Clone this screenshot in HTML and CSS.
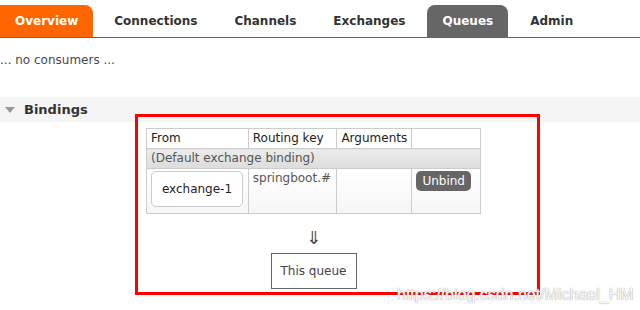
FILE: index.html
```html
<!DOCTYPE html>
<html lang="en">
<head>
    <meta charset="UTF-8">
    <title>Queues</title>
    <link rel="stylesheet" href="styles.css">
</head>
<body>
<div class="page">
    <!-- Top tabs -->
    <ul class="tabs">
        <li class="tab tab-overview">Overview</li>
        <li class="tab">Connections</li>
        <li class="tab">Channels</li>
        <li class="tab">Exchanges</li>
        <li class="tab tab-active">Queues</li>
        <li class="tab">Admin</li>
    </ul>

    <p class="consumers">... no consumers ...</p>

    <!-- Bindings section -->
    <div class="section-head">
        <span class="toggle"></span>
        <h2>Bindings</h2>
    </div>

    <div class="highlight">
        <div class="bindings">
            <table class="list">
                <tr>
                    <th class="col-from">From</th>
                    <th class="col-key">Routing key</th>
                    <th class="col-args">Arguments</th>
                    <th class="col-act"></th>
                </tr>
                <tr class="default-row">
                    <td colspan="4">(Default exchange binding)</td>
                </tr>
                <tr class="data-row">
                    <td><span class="exchange">exchange-1</span></td>
                    <td>springboot.#</td>
                    <td></td>
                    <td><button class="unbind">Unbind</button></td>
                </tr>
            </table>
            <div class="arrow">&#8659;</div>
            <div class="this-queue">This queue</div>
        </div>
    </div>

    <div class="watermark">https://blog.csdn.net/Michael_HM</div>
</div>
</body>
</html>
```

FILE: styles.css
```css
* {
    box-sizing: border-box;
    margin: 0;
    padding: 0;
}

body {
    background-color: #fff;
    color: #484848;
    font-family: 'DejaVu Sans', Verdana, sans-serif;
    font-size: 12px;
    width: 640px;
    height: 310px;
    overflow: hidden;
}

.page {
    position: relative;
    height: 310px;
}

/* Tabs */
.tabs {
    list-style: none;
    display: flex;
    margin-top: 5px;
    border-bottom: 1px solid #666;
    height: 33px;
}

.tab {
    height: 32px;
    line-height: 32px;
    padding: 0 15px;
    margin-right: 7px;
    font-weight: bold;
    font-size: 12px;
    color: #333;
    border-radius: 8px 8px 0 0;
}

.tab-overview {
    background-color: #f60;
    color: #fff;
    border-top-left-radius: 0;
    margin-right: 6px;
}

.tab-active {
    background-color: #666;
    color: #fff;
}

.consumers {
    margin-top: 15px;
    font-size: 12px;
    line-height: 14px;
    color: #484848;
}

/* Section header */
.section-head {
    margin-top: 30px;
    height: 25px;
    background-color: #f5f5f5;
    display: flex;
    align-items: center;
}

.toggle {
    width: 0;
    height: 0;
    margin-left: 5px;
    margin-right: 9px;
    border-left: 5px solid transparent;
    border-right: 5px solid transparent;
    border-top: 6px solid #999;
}

.section-head h2 {
    font-size: 13px;
    font-weight: bold;
    color: #333;
}

/* red annotation frame */
.highlight {
    margin-left: 135px;
    margin-top: -8px;
    width: 405px;
    height: 181px;
    border: 3px solid #f00;
    padding: 11px 0 0 8px;
}

.bindings {
    width: 335px;
    text-align: center;
}

.list {
    border-collapse: collapse;
    width: 335px;
    text-align: left;
}

.list th,
.list td {
    border: 1px solid #ccc;
    font-weight: normal;
    vertical-align: top;
    padding: 2px 4px;
    line-height: 15px;
}

.list th {
    height: 20px;
    color: #222;
}

.col-from { width: 102px; }
.col-key { width: 89px; }
.col-args { width: 74px; }
.col-act { width: 70px; }

.default-row td {
    height: 20px;
    color: #555;
    background: linear-gradient(#ececec, #dcdcdc);
}

.data-row td {
    height: 45px;
    color: #555;
    background: linear-gradient(#fff, #f6f6f6);
}

.exchange {
    display: block;
    width: 92px;
    height: 36px;
    line-height: 34px;
    border: 1px solid #ccc;
    border-radius: 5px;
    background-color: #fff;
    text-align: center;
    color: #222;
}

.unbind {
    width: 55px;
    height: 20px;
    border: none;
    border-radius: 5px;
    background-color: #666;
    color: #fff;
    font-family: 'DejaVu Sans', Verdana, sans-serif;
    font-size: 12px;
}

.arrow {
    margin-top: 12px;
    font-size: 18px;
    line-height: 24px;
    color: #444;
}

.this-queue {
    display: inline-block;
    margin-top: 3px;
    width: 86px;
    height: 36px;
    line-height: 34px;
    border: 1px solid #666;
    color: #444;
}

.watermark {
    position: absolute;
    left: 397px;
    top: 281px;
    font-family: 'Liberation Sans', Arial, sans-serif;
    font-size: 16px;
    color: #fafafa;
    text-shadow: 0 0 1px #aaa, 0 0 1px #aaa;
}
```
